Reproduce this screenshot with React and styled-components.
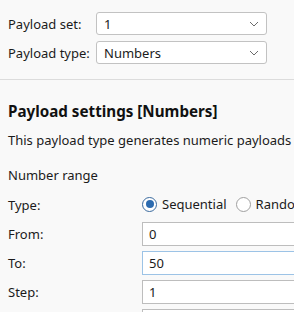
import React from 'react'
import styled, { createGlobalStyle } from 'styled-components'

const GlobalStyle = createGlobalStyle`
  html, body {
    margin: 0;
    padding: 0;
    background: #f9f9f9;
    overflow: hidden;
  }
  body {
    font-family: "Noto Sans", "Open Sans", sans-serif;
    font-size: 13px;
    color: #1b1b1b;
  }
`

const Page = styled.div`
  width: 294px;
  height: 312px;
  overflow: hidden;
  background: #f9f9f9;
`

const TopSection = styled.div`
  display: flex;
  flex-direction: column;
  gap: 6px;
  padding: 12px 8px 15px;
  border-bottom: 1px solid #dcdcdc;
`

const SelectRow = styled.div`
  display: grid;
  grid-template-columns: 88px 171px;
  align-items: center;
  height: 23px;
`

const Label = styled.span`
  white-space: nowrap;
  line-height: 18px;
`

const Select = styled.div`
  display: flex;
  align-items: center;
  justify-content: space-between;
  box-sizing: border-box;
  height: 23px;
  padding: 0 7px 0 7px;
  background: #fff;
  border: 1px solid #c2c2c2;
  border-radius: 3px;
`

const Chevron = () => (
  <svg width="10" height="6" viewBox="0 0 10 6">
    <path d="M1 1 L5 5 L9 1" fill="none" stroke="#6b6b6b" strokeWidth="1" />
  </svg>
)

const Settings = styled.div`
  display: flex;
  flex-direction: column;
  padding: 21px 8px 0;
`

const Heading = styled.h2`
  margin: 0;
  font-size: 15.2px;
  font-weight: 700;
  line-height: 20px;
  color: #111;
  white-space: nowrap;
`

const Desc = styled.p`
  margin: 10px 0 0;
  line-height: 18px;
  white-space: nowrap;
`

const SubTitle = styled.div`
  margin-top: 17px;
  line-height: 18px;
`

const FieldGrid = styled.div`
  display: grid;
  grid-template-columns: 134px 220px;
  grid-auto-rows: 24px;
  row-gap: 5px;
  margin-top: 9px;
  align-items: center;
`

const TypeRow = styled.div`
  display: flex;
  align-items: center;
  margin-bottom: 2px;
  white-space: nowrap;
`

const RadioOption = styled.label`
  display: flex;
  align-items: center;
  gap: 5px;
  margin-right: 9px;
`

const RadioCircle = styled.span`
  display: flex;
  align-items: center;
  justify-content: center;
  box-sizing: border-box;
  width: 15px;
  height: 15px;
  border-radius: 50%;
  background: #fff;
  border: ${(p) => (p.$checked ? '1.5px solid #3a6a9e' : '1px solid #a0a0a0')};

  &::after {
    content: '';
    display: ${(p) => (p.$checked ? 'block' : 'none')};
    width: 8px;
    height: 8px;
    border-radius: 50%;
    background: #2c6bb0;
  }
`

const Input = styled.div`
  box-sizing: border-box;
  height: 24px;
  display: flex;
  align-items: center;
  padding: 0 6px;
  background: #fff;
  border: 1px solid ${(p) => (p.$focused ? '#9cc3e6' : '#bdbdbd')};
`

const fields = [
  { label: 'From:', value: '0' },
  { label: 'To:', value: '50', focused: true },
  { label: 'Step:', value: '1' },
  { label: '', value: '' },
]

export default function App() {
  return (
    <Page>
      <GlobalStyle />
      <TopSection>
        <SelectRow>
          <Label>Payload set:</Label>
          <Select>
            <span>1</span>
            <Chevron />
          </Select>
        </SelectRow>
        <SelectRow>
          <Label>Payload type:</Label>
          <Select>
            <span>Numbers</span>
            <Chevron />
          </Select>
        </SelectRow>
      </TopSection>
      <Settings>
        <Heading>Payload settings [Numbers]</Heading>
        <Desc>This payload type generates numeric payloads</Desc>
        <SubTitle>Number range</SubTitle>
        <FieldGrid>
          <Label>Type:</Label>
          <TypeRow>
            <RadioOption>
              <RadioCircle $checked />
              <span>Sequential</span>
            </RadioOption>
            <RadioOption>
              <RadioCircle />
              <span>Random</span>
            </RadioOption>
          </TypeRow>
          {fields.map((f, i) => (
            <React.Fragment key={i}>
              <Label>{f.label}</Label>
              <Input $focused={f.focused}>{f.value}</Input>
            </React.Fragment>
          ))}
        </FieldGrid>
      </Settings>
    </Page>
  )
}
